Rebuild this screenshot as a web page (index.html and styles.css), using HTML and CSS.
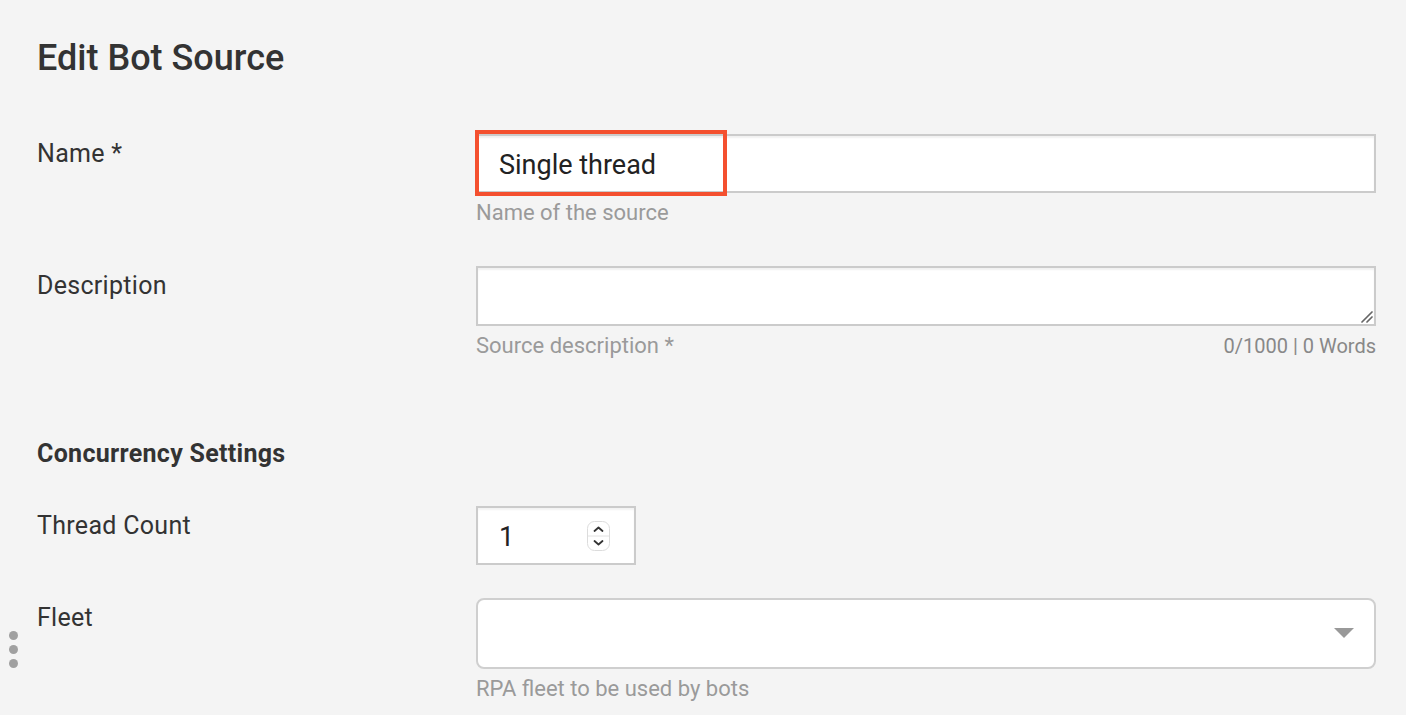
FILE: index.html
```html
<!DOCTYPE html>
<html lang="en">
<head>
    <meta charset="UTF-8">
    <title>Edit Bot Source</title>
    <meta name="viewport" content="width=device-width, initial-scale=1.0">
    <link rel="stylesheet" href="styles.css">
</head>
<body>
    <!-- drag handle on the panel edge -->
    <div class="drag-handle">
        <span></span><span></span><span></span>
    </div>

    <div class="page">
        <h1 class="page-title">Edit Bot Source</h1>

        <div class="field-row">
            <label class="field-label" for="srcName">Name *</label>
            <div class="field-body">
                <div class="name-wrap">
                    <input class="text-input" id="srcName" type="text" value="Single thread">
                    <div class="mark-box"></div>
                </div>
                <div class="field-help">Name of the source</div>
            </div>
        </div>

        <div class="field-row row-desc">
            <label class="field-label" for="srcDesc">Description</label>
            <div class="field-body">
                <div class="area-wrap">
                    <textarea class="text-area" id="srcDesc"></textarea>
                    <svg class="grip" width="14" height="14" viewBox="0 0 14 14">
                        <path d="M13 3 L3 13 M13 8 L8 13" stroke="#666" stroke-width="1.7" stroke-linecap="round"/>
                    </svg>
                </div>
                <div class="field-help help-split">
                    <span>Source description *</span>
                    <span class="counter">0/1000 | 0 Words</span>
                </div>
            </div>
        </div>

        <h2 class="group-title">Concurrency Settings</h2>

        <div class="field-row">
            <label class="field-label" for="threadCount">Thread Count</label>
            <div class="field-body">
                <div class="num-box">
                    <input class="num-input" id="threadCount" type="text" value="1">
                    <svg class="spinner" width="23" height="30" viewBox="0 0 23 30">
                        <rect x="0.5" y="0.5" width="22" height="29" rx="7" fill="#fff" stroke="#dcdcdc"/>
                        <line x1="1" y1="15" x2="22" y2="15" stroke="#e2e2e2"/>
                        <path d="M7.5 10 L11.5 6.5 L15.5 10" fill="none" stroke="#333" stroke-width="1.8" stroke-linecap="round" stroke-linejoin="round"/>
                        <path d="M7.5 20 L11.5 23.5 L15.5 20" fill="none" stroke="#333" stroke-width="1.8" stroke-linecap="round" stroke-linejoin="round"/>
                    </svg>
                </div>
            </div>
        </div>

        <div class="field-row row-fleet">
            <label class="field-label">Fleet</label>
            <div class="field-body">
                <div class="select-box">
                    <span class="select-value"></span>
                    <svg class="caret" width="20" height="10" viewBox="0 0 20 10">
                        <path d="M0 0 H20 L10 10 Z" fill="#999"/>
                    </svg>
                </div>
                <div class="field-help">RPA fleet to be used by bots</div>
            </div>
        </div>
    </div>
</body>
</html>
```

FILE: styles.css
```css
html, body {
    margin: 0;
    padding: 0;
    background: #f4f4f4;
    font-family: Roboto, 'Noto Sans', Arial, sans-serif;
    color: #333;
    overflow: hidden;
}
.page {
    padding: 38px 30px 0 37px;
}
.page-title {
    margin: 0 0 56px 0;
    font-size: 36px;
    line-height: 40px;
    font-weight: 500;
    color: #333;
}
.field-row {
    display: flex;
    align-items: flex-start;
}
.row-desc { margin-top: 41px; }
.row-fleet { margin-top: 33px; }
.field-label {
    width: 439px;
    flex: none;
    padding-top: 6px;
    font-size: 25px;
    line-height: 28px;
    letter-spacing: 0.3px;
    color: #333;
}
.field-body {
    flex: 1;
    min-width: 0;
}
.field-help {
    margin-top: 8px;
    font-size: 22px;
    line-height: 24px;
    color: #9a9a9a;
}
.help-split {
    display: flex;
    justify-content: space-between;
    align-items: baseline;
}
.counter {
    font-size: 20px;
    color: #888;
}

.name-wrap,
.area-wrap {
    position: relative;
}
.text-input,
.text-area,
.num-input {
    font-family: Roboto, 'Noto Sans', Arial, sans-serif;
    font-size: 27px;
    color: #222;
    outline: none;
}
.text-input {
    display: block;
    width: 100%;
    height: 59px;
    box-sizing: border-box;
    padding: 2px 21px 0 21px;
    border: 2px solid #cbcbcb;
    background: #fff;
    box-shadow: inset 0 2px 2px rgba(0,0,0,0.06);
}
/* highlight around the typed value */
.mark-box {
    position: absolute;
    left: -1px;
    top: -4px;
    width: 252px;
    height: 66px;
    box-sizing: border-box;
    border: 4px solid #f4502f;
    pointer-events: none;
}
.text-area {
    display: block;
    width: 100%;
    height: 60px;
    box-sizing: border-box;
    padding: 10px 21px;
    border: 2px solid #cbcbcb;
    background: #fff;
    resize: none;
    box-shadow: inset 0 2px 2px rgba(0,0,0,0.06);
}
.grip {
    position: absolute;
    right: 3px;
    bottom: 3px;
}
.group-title {
    margin: 82px 0 38px 0;
    font-size: 25px;
    line-height: 28px;
    letter-spacing: 0.3px;
    font-weight: 700;
    color: #333;
}
.num-box {
    width: 160px;
    height: 59px;
    box-sizing: border-box;
    border: 2px solid #cbcbcb;
    background: #fff;
    display: flex;
    align-items: center;
    padding: 0 24px 0 21px;
    box-shadow: inset 0 2px 2px rgba(0,0,0,0.05);
}
.num-input {
    flex: 1;
    min-width: 0;
    border: none;
    padding: 2px 0 0 0;
    background: transparent;
}
.spinner { flex: none; }
.select-box {
    height: 71px;
    box-sizing: border-box;
    border: 2px solid #cfcfcf;
    border-radius: 8px;
    background: #fff;
    display: flex;
    align-items: center;
    justify-content: space-between;
    padding: 0 20px 0 21px;
}
.caret { margin-top: -2px; }

.drag-handle {
    position: absolute;
    left: 9px;
    top: 631px;
    display: flex;
    flex-direction: column;
    gap: 5px;
}
.drag-handle span {
    width: 9px;
    height: 9px;
    border-radius: 50%;
    background: #a0a0a0;
}
```
